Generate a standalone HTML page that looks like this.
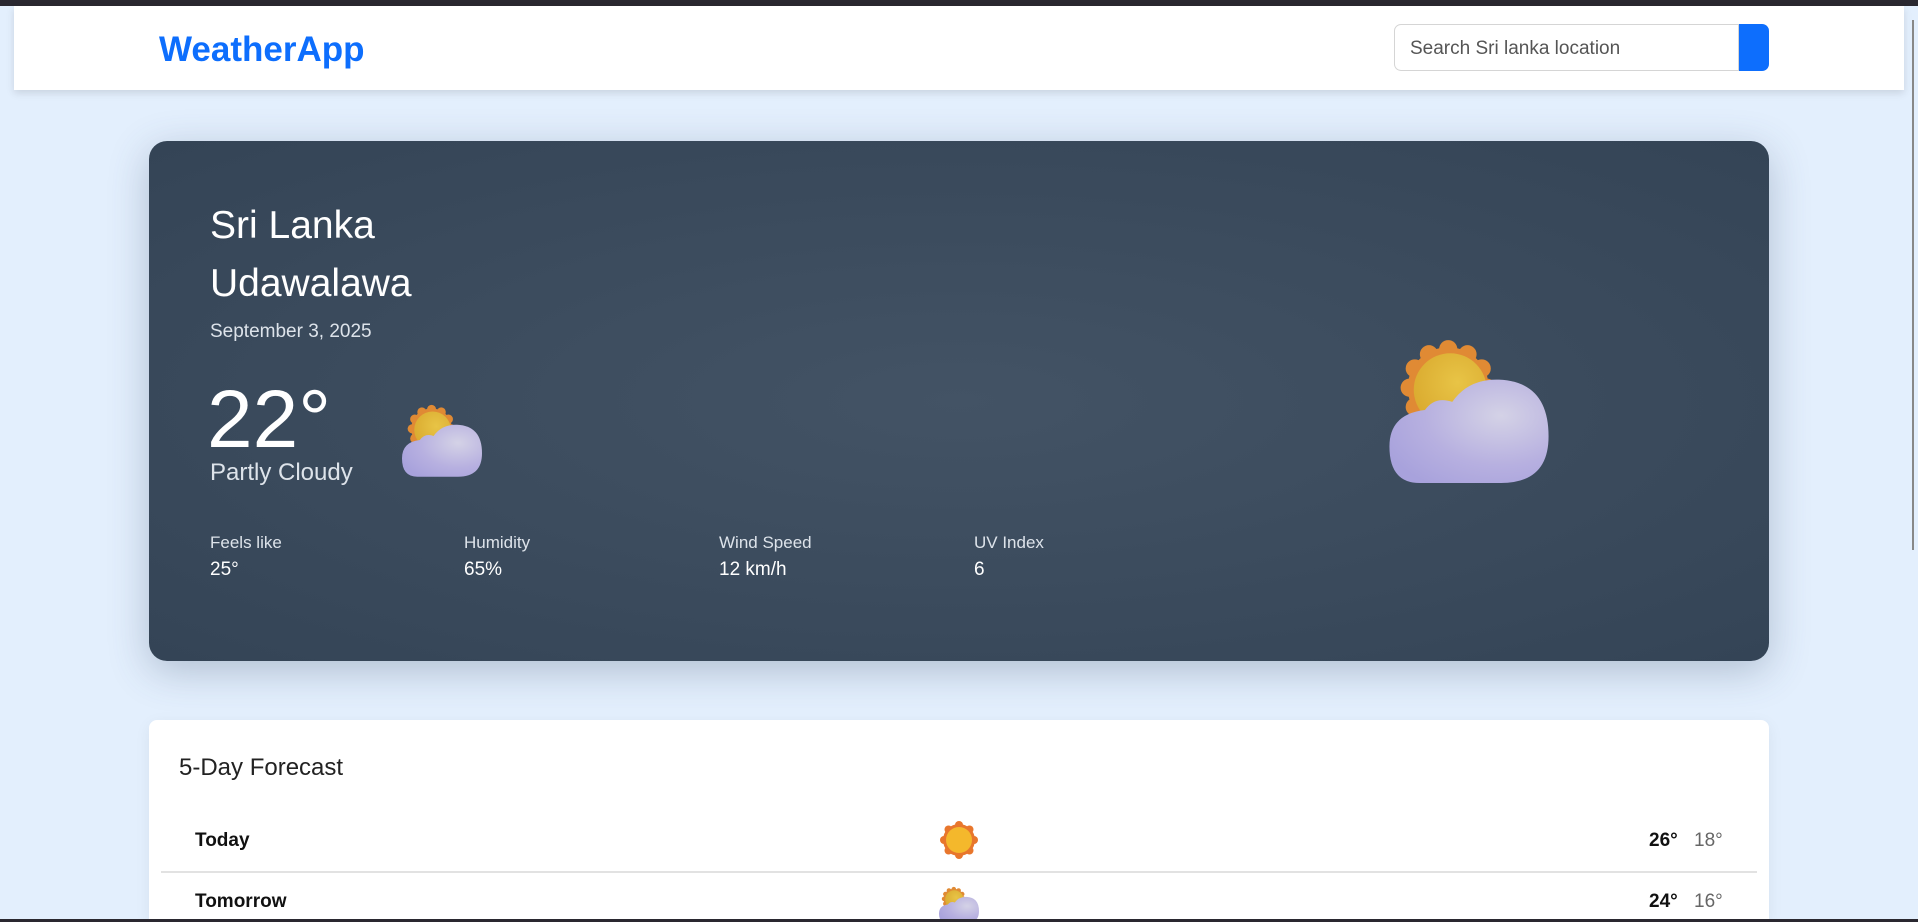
<!DOCTYPE html>
<html><head><meta charset="utf-8"><style>
*{box-sizing:border-box;margin:0;padding:0}
html{width:1918px;height:922px;overflow:hidden}
body{width:1918px;height:922px;overflow:hidden;background:#e3effd;font-family:"Liberation Sans",Arial,sans-serif;position:relative}
.topbar{position:absolute;left:0;top:0;width:1918px;height:6px;background:#2a2830}
.botbar{position:absolute;left:0;top:919px;width:1918px;height:3px;background:#2a2830}
.sb{position:absolute;left:1912px;top:20px;width:2px;height:530px;background:#888}
.header{position:absolute;left:14px;top:6px;width:1890px;height:84px;background:#fff;box-shadow:0 3px 8px rgba(0,0,0,.12)}
.logo{position:absolute;left:145px;top:24px;font-size:35px;font-weight:bold;color:#0d6efd}
.search{position:absolute;left:1380px;top:18px;width:345px;height:47px;border:1px solid #d5d5d5;border-radius:7px 0 0 7px;font-size:19px;color:#555;padding:13px 15px}
.btn{position:absolute;left:1725px;top:18px;width:30px;height:47px;background:#0d6efd;border-radius:0 7px 7px 0}
.main{position:absolute;left:149px;top:141px;width:1620px;height:520px;border-radius:18px;background:radial-gradient(ellipse at center,#435365 0%,#3a4a5c 60%,#344456 100%);box-shadow:0 10px 40px rgba(60,80,110,.3);color:#fff}
.main div{position:absolute;white-space:nowrap}
.fc{position:absolute;left:149px;top:720px;width:1620px;height:202px;background:#fff;border-radius:8px 8px 0 0;box-shadow:0 4px 16px rgba(0,0,0,.06);overflow:hidden}
.fc div{position:absolute;white-space:nowrap}
</style></head><body>
<div class="topbar"></div>
<div class="header"><div class="logo">WeatherApp</div><div class="search">Search Sri lanka location</div><div class="btn"></div></div>
<div class="sb"></div>
<svg width="0" height="0" style="position:absolute"><defs>
<radialGradient id="sun" cx=".6" cy=".4" r=".7"><stop offset="0" stop-color="#e8c446"/><stop offset="1" stop-color="#d9a92e"/></radialGradient>
<radialGradient id="cl" cx=".7" cy=".35" r=".8"><stop offset="0" stop-color="#d4d2e6"/><stop offset=".6" stop-color="#b7b0e0"/><stop offset="1" stop-color="#a8a2dc"/></radialGradient>
<g id="pc">
<g fill="#e08a34">
<circle cx="58" cy="54" r="40"/>
<circle cx="58" cy="16" r="9"/><circle cx="77" cy="21" r="9"/><circle cx="91" cy="35" r="9"/><circle cx="96" cy="54" r="9"/><circle cx="91" cy="73" r="9"/><circle cx="77" cy="87" r="9"/><circle cx="58" cy="92" r="9"/><circle cx="39" cy="87" r="9"/><circle cx="25" cy="73" r="9"/><circle cx="20" cy="54" r="9"/><circle cx="25" cy="35" r="9"/><circle cx="39" cy="21" r="9"/>
</g>
<circle cx="60" cy="56" r="36" fill="url(#sun)"/>
<path d="M30 148 Q0 148 0 112 Q0 80 35 76 Q45 62 62 68 Q78 45 108 46 Q157 48 157 102 Q157 148 110 148 Z" fill="url(#cl)"/>
</g>
<g id="sunico"><g fill="#e8762c"><circle cx="20" cy="20" r="16"/><circle cx="20" cy="5" r="4"/><circle cx="20" cy="35" r="4"/><circle cx="5" cy="20" r="4"/><circle cx="35" cy="20" r="4"/><circle cx="9.5" cy="9.5" r="4"/><circle cx="30.5" cy="9.5" r="4"/><circle cx="9.5" cy="30.5" r="4"/><circle cx="30.5" cy="30.5" r="4"/></g><circle cx="20" cy="20" r="13" fill="#f4b82c"/></g>
</defs></svg>
<div class="main">
<div style="left:61px;top:63px;font-size:39px">Sri Lanka</div>
<div style="left:61px;top:121px;font-size:39px">Udawalawa</div>
<div style="left:61px;top:180px;font-size:19px;color:#dde3ea">September 3, 2025</div>
<div style="left:58px;top:238px;font-size:82px;line-height:1">22°</div>
<div style="left:61px;top:318px;font-size:24px;color:#dde3ea">Partly Cloudy</div>
<svg style="position:absolute;left:253px;top:260px" width="80" height="76" viewBox="0 0 157 148"><use href="#pc"/></svg>
<svg style="position:absolute;left:1240px;top:192px" width="160" height="150" viewBox="0 0 157 148"><use href="#pc"/></svg>
<div style="left:61px;top:392px;font-size:17px;color:#dde3ea">Feels like</div><div style="left:61px;top:418px;font-size:19px">25°</div>
<div style="left:315px;top:392px;font-size:17px;color:#dde3ea">Humidity</div><div style="left:315px;top:418px;font-size:19px">65%</div>
<div style="left:570px;top:392px;font-size:17px;color:#dde3ea">Wind Speed</div><div style="left:570px;top:418px;font-size:19px">12 km/h</div>
<div style="left:825px;top:392px;font-size:17px;color:#dde3ea">UV Index</div><div style="left:825px;top:418px;font-size:19px">6</div>
</div>
<div class="fc">
<div style="left:30px;top:34px;font-size:24px;color:#222">5-Day Forecast</div>
<div style="left:46px;top:110px;font-size:19px;font-weight:bold;color:#111">Today</div>
<svg style="position:absolute;left:790px;top:100px" width="40" height="40" viewBox="0 0 40 40"><use href="#sunico"/></svg>
<div style="left:1500px;top:110px;font-size:19px;font-weight:bold;color:#111">26°</div>
<div style="left:1545px;top:110px;font-size:19px;color:#666">18°</div>
<div style="left:12px;top:151px;width:1596px;height:2px;background:#e2e2e2"></div>
<div style="left:46px;top:171px;font-size:19px;font-weight:bold;color:#111">Tomorrow</div>
<svg style="position:absolute;left:790px;top:165px" width="40" height="38" viewBox="0 0 157 148"><use href="#pc"/></svg>
<div style="left:1500px;top:171px;font-size:19px;font-weight:bold;color:#111">24°</div>
<div style="left:1545px;top:171px;font-size:19px;color:#666">16°</div>
</div>
<div class="botbar"></div>
</body></html>
